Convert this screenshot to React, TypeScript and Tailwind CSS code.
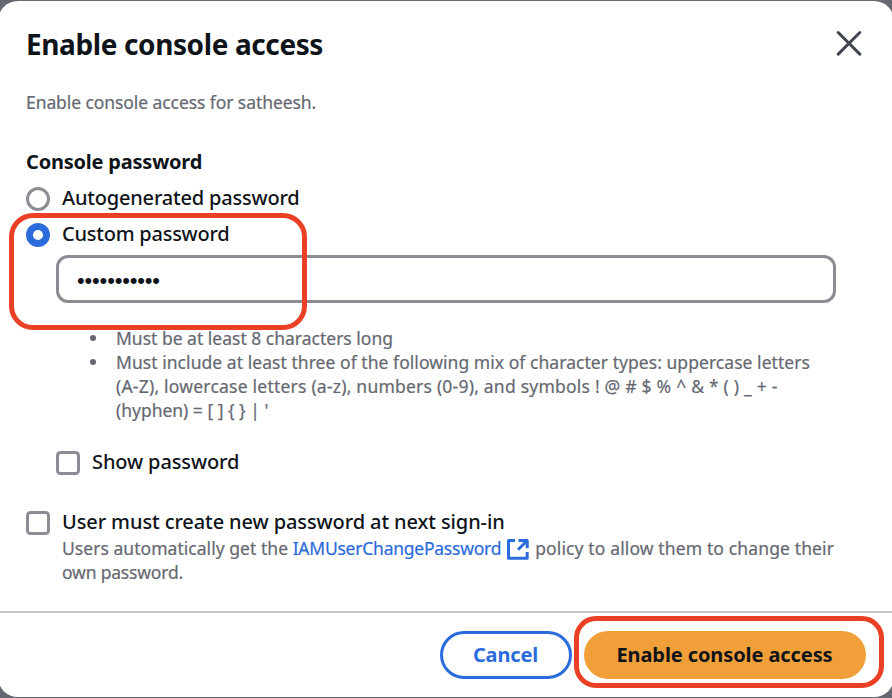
import type { ReactNode } from 'react'

function Radio({ checked = false }: { checked?: boolean }) {
  return (
    <span
      className={
        checked
          ? 'mt-px h-6 w-6 shrink-0 rounded-full border-[7px] border-[#2b6bdb] bg-white'
          : 'mt-px h-6 w-6 shrink-0 rounded-full border-[3px] border-[#8c8c94] bg-white'
      }
    />
  )
}

function Checkbox() {
  return <span className="mt-px h-6 w-6 shrink-0 rounded-[4.5px] border-[3px] border-[#8c8c94] bg-white" />
}

function Rule({ children }: { children: ReactNode }) {
  return (
    <li className="flex">
      <span className="mt-[9px] mr-5 h-1.5 w-1.5 shrink-0 rounded-full bg-[#656871]" />
      <span className="whitespace-nowrap">{children}</span>
    </li>
  )
}

function ExternalIcon() {
  return (
    <svg width="22" height="21" viewBox="0 0 22 21" fill="none" stroke="#2b6bdb" strokeWidth="3" strokeLinejoin="round" className="ml-[6px] mt-[3px] shrink-0">
      <path d="M8 1.5H1.5V19.2H20.2V13" />
      <path d="M11.5 1.5H20.2V9.3M20 1.7L11 10.7" />
    </svg>
  )
}

export default function App() {
  return (
    <div className="relative h-[698px] w-[892px] overflow-hidden bg-[#656871] py-px font-['Noto_Sans','Open_Sans',sans-serif] text-[#0f141a]">
      <div className="-mx-[2px] flex h-[696px] flex-col rounded-[20px] bg-white">
        <header className="flex justify-between pt-[25px] pr-[32px] pl-[28px]">
          <h2 className="text-[28px] leading-9 font-bold tracking-[-0.39px]">Enable console access</h2>
          <svg width="26" height="26" viewBox="0 0 26 26" className="mt-1" fill="none" stroke="#424650" strokeWidth="3" strokeLinecap="round">
            <path d="M2.2 2.5L23.8 24.1M23.8 2.5L2.2 24.1" />
          </svg>
        </header>

        <main className="flex h-[549px] flex-col pt-[28px] pl-[28px]">
          <p className="text-[17.5px] leading-6 tracking-[-0.08px] text-[#656871] [-webkit-text-stroke:0.2px]">Enable console access for satheesh.</p>

          <h3 className="mt-9 text-[20px] leading-6 font-bold tracking-[-0.21px]">Console password</h3>
          <label className="mt-3 flex h-6 gap-3 text-[20px] leading-6 font-medium">
            <Radio />
            <span className="tracking-[-0.19px]">Autogenerated password</span>
          </label>
          <label className="mt-3 flex h-6 gap-3 text-[20px] leading-6 font-medium">
            <Radio checked />
            <span className="tracking-[-0.24px]">Custom password</span>
          </label>

          <div className="mt-[9px] ml-[30px] flex h-12 w-[780px] shrink-0 items-center rounded-[12px] border-[3px] border-[#8c8c94] pt-1 pl-[18px] font-['Liberation_Sans',sans-serif] text-[22px] leading-6 tracking-[-0.17px]">
            •••••••••••
          </div>

          <ul className="mt-[23px] ml-16 text-[17.5px] leading-6 text-[#656871] [-webkit-text-stroke:0.2px]">
            <Rule>Must be at least 8 characters long</Rule>
            <Rule>
              <span className="tracking-[0.05px]">Must include at least three of the following mix of character types: uppercase letters</span>
              <br />
              <span className="tracking-[0.22px]">(A-Z), lowercase letters (a-z), numbers (0-9), and symbols ! @ # $ % ^ &amp; * ( ) _ + -</span>
              <br />
              <span className="tracking-[-0.02px]">(hyphen) = [ ] {'{ }'} | '</span>
            </Rule>
          </ul>

          <label className="mt-7 ml-[30px] flex h-6 gap-3 text-[20px] leading-6 font-medium">
            <Checkbox />
            <span className="tracking-[-0.12px]">Show password</span>
          </label>

          <label className="mt-9 flex gap-3 text-[20px] leading-6 font-medium">
            <Checkbox />
            <span>
              <span className="block h-[26px] tracking-[-0.1px]">User must create new password at next sign-in</span>
              <span className="block text-[17.5px] font-normal text-[#656871] [-webkit-text-stroke:0.2px]">
                <span className="flex h-6 whitespace-pre">
                  <span className="tracking-[0.04px]">Users automatically get the </span>
                  <a className="tracking-[-0.24px] text-[#2b6bdb]">IAMUserChangePassword</a>
                  <ExternalIcon />
                  <span className="ml-[6px] tracking-[0.13px]">policy to allow them to change their</span>
                </span>
                <span className="block tracking-[-0.18px]">own password.</span>
              </span>
            </span>
          </label>
        </main>

        <footer className="flex flex-1 justify-end gap-3 border-t-2 border-[#c6c6cd] pt-[18px] pr-7 text-[20px] font-bold">
          <button className="h-12 w-[132px] rounded-full border-[3px] border-[#2b6bdb] pr-px pb-[2px] leading-[39px] tracking-[-0.15px] text-[#2b6bdb]">Cancel</button>
          <button className="h-12 w-[282px] rounded-full bg-[#f19f39] pr-px pb-[2px] leading-[45px] tracking-[-0.09px]">Enable console access</button>
        </footer>
      </div>

      <div className="pointer-events-none absolute top-[213px] left-[9px] h-[117px] w-[298px] rounded-[24px] border-[5px] border-[#eb4026]" />
      <div className="pointer-events-none absolute top-[616px] left-[574px] h-[72px] w-[310px] rounded-[22px] border-[5px] border-[#eb4026]" />
    </div>
  )
}
